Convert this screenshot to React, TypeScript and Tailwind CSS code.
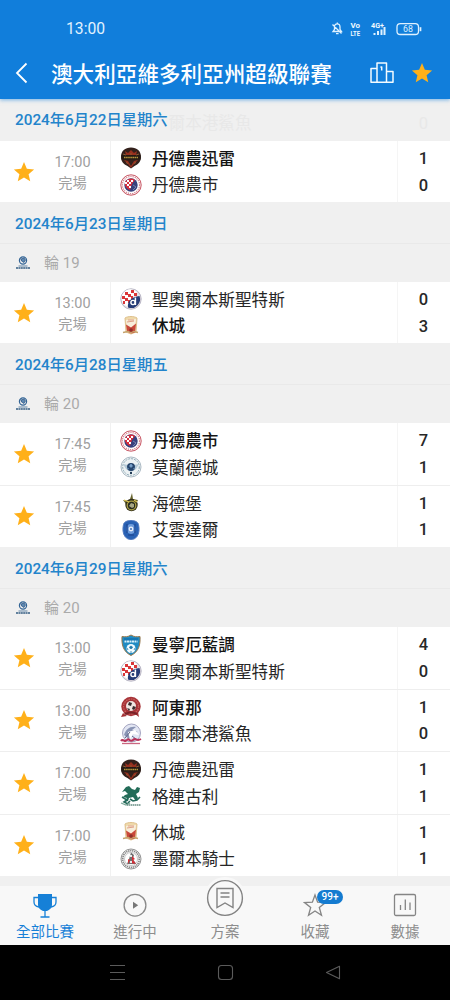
import React from "react";

type Crest =
  | "thunder" | "dandenong" | "saints" | "hume" | "moreland" | "heidelberg"
  | "avondale" | "manningham" | "altona" | "sharks" | "gully" | "knights";

interface Team { name: string; crest: Crest; score: number; bold?: boolean }
interface Match { time: string; home: Team; away: Team }
interface Day { date: string; round?: string; matches: Match[] }

const STAR = "M12 1.2l3.1 7.3 7.9.7-6 5.2 1.8 7.7L12 18l-6.8 4.1L7 14.4 1 9.2l7.9-.7z";

const t = (name: string, crest: Crest, score: number, bold = false): Team => ({ name, crest, score, bold });

const days: Day[] = [
  {
    date: "2024年6月22日星期六",
    matches: [{ time: "17:00", home: t("丹德農迅雷", "thunder", 1, true), away: t("丹德農市", "dandenong", 0) }],
  },
  {
    date: "2024年6月23日星期日",
    round: "輪 19",
    matches: [{ time: "13:00", home: t("聖奧爾本斯聖特斯", "saints", 0), away: t("休城", "hume", 3, true) }],
  },
  {
    date: "2024年6月28日星期五",
    round: "輪 20",
    matches: [
      { time: "17:45", home: t("丹德農市", "dandenong", 7, true), away: t("莫蘭德城", "moreland", 1) },
      { time: "17:45", home: t("海德堡", "heidelberg", 1), away: t("艾雲達爾", "avondale", 1) },
    ],
  },
  {
    date: "2024年6月29日星期六",
    round: "輪 20",
    matches: [
      { time: "13:00", home: t("曼寧厄藍調", "manningham", 4, true), away: t("聖奧爾本斯聖特斯", "saints", 0) },
      { time: "13:00", home: t("阿東那", "altona", 1, true), away: t("墨爾本港鯊魚", "sharks", 0) },
      { time: "17:00", home: t("丹德農迅雷", "thunder", 1), away: t("格連古利", "gully", 1) },
      { time: "17:00", home: t("休城", "hume", 1), away: t("墨爾本騎士", "knights", 1) },
    ],
  },
];

function CrestArt({ kind }: { kind: Crest }) {
  switch (kind) {
    case "thunder":
      return (
        <>
          <path d="M11 .5c6 0 10 3.500 10 9.500 0 4-2.500 7.500-6.500 9L11 21.500 7.500 19C3.500 17.500 1 14 1 10 1 4 5 .5 11 .5z" fill="#33201b" />
          <path d="M5 4l3 2 3-3 3 3 3-2-1 4H6zM4 13l4 1 3 5 3-5 4-1-4 4-3 4-3-4z" fill="#97301f" />
          <path d="M1.500 8h19v4.500h-19z" fill="#251a14" />
          <path d="M4 10.500h14" stroke="#b8983d" strokeWidth="1.300" strokeDasharray="1.600 .5" />
          <path d="M3 7l3 1M19 7l-3 1M6 15.500l2 1M16 15.500l-2 1M10 7h2" stroke="#8f5931" />
        </>
      );
    case "dandenong":
      return (
        <>
          <circle cx="11" cy="11" r="10.200" fill="#fff" stroke="#c65361" />
          <circle cx="11" cy="11" r="8.600" fill="none" stroke="#d78b95" strokeWidth="1.300" strokeDasharray="1.300 .9" />
          <circle cx="11" cy="11" r="6.700" fill="#37417d" />
          <path d="M5 8a6.700 6.700 0 0 1 10-2l-3 4-2 6a7 7 0 0 1-5-8z" fill="#d52e3e" />
          <path d="M7 6h2v2H7zM11 6h2v2h-2zM9 8h2v2H9zM5 8h2v2H5zM7 10h2v2H7zM9 12h2v2H9z" fill="#fff" />
          <path d="M13 11l3 2-3 3" stroke="#7782ac" fill="none" />
        </>
      );
    case "saints":
      return (
        <>
          <circle cx="11" cy="11" r="10.200" fill="#e9e1e4" stroke="#b7b5c4" />
          <path d="M2 13A9 9 0 0 1 17 4l-4 5-4 10a9 9 0 0 1-7-6z" fill="#fff" />
          <path d="M5 4h3v3H5zM11 2h3v3h-3zM8 6h3v3H8zM2 8h3v3H2zM14 5h3v3h-3zM5 10h3v3H5zM11 8h2v3h-2zM3 13h2v3H3zM8 12h2v3H8z" fill="#d93639" />
          <path d="M19.500 8A9 9 0 0 1 8 19.500c-1-6 4-11 11.500-11.500z" fill="#263c77" />
          <circle cx="13" cy="14.500" r="2.100" fill="none" stroke="#fff" strokeWidth="1.400" />
          <path d="M15.400 9.500v7.500" stroke="#fff" strokeWidth="1.500" />
        </>
      );
    case "hume":
      return (
        <>
          <path d="M5 3c3-2 9-2 12 0l-1 14-5 2-5-2z" fill="#efd9aa" stroke="#dfc18e" />
          <path d="M6 5l10-1-1 8-8 1z" fill="#f8eedb" />
          <path d="M6 9.500l5 3 5-4-1 9-4 1-4-2z" fill="#c9483a" />
          <path d="M8 5h6M7 7l7-1" stroke="#dfa187" />
          <path d="M3 17.500l5-1 3 1 3-1 4 1" fill="none" stroke="#c5a36d" strokeWidth="1.300" />
          <circle cx="11" cy="15" r="1.800" fill="#8e302a" />
        </>
      );
    case "moreland":
      return (
        <>
          <circle cx="11" cy="11" r="10" fill="#edf2f4" stroke="#acbac4" />
          <circle cx="11" cy="11" r="8.300" fill="none" stroke="#8eabb7" strokeDasharray="2 1" />
          <path d="M3 8l5 1 3-2 3 2 5-1-3 5-5 3-5-3z" fill="#b5c9d6" />
          <circle cx="11" cy="11" r="4" fill="#27466e" />
          <path d="M11 8l1.500 2-1.500 1.500L9.500 10zM7 12l2 1M15 12l-2 1" fill="#7ba4cd" stroke="#7ba4cd" strokeWidth=".7" />
          <path d="M10 16h2v2h-2z" fill="#243d57" />
        </>
      );
    case "heidelberg":
      return (
        <>
          <path d="M12 1l1 6h-3zM3 8l6 1 4-2 5 1-2 4H6z" fill="#69652f" />
          <circle cx="11.500" cy="13" r="6.200" fill="#332f1b" />
          <circle cx="11.500" cy="13.500" r="4.300" fill="#272a20" stroke="#a69d46" strokeWidth="1.300" />
          <path d="M9 14l2-3 3 1v3l-2 1z" fill="#a8a785" />
          <path d="M4 8l5 2M14 8l3 2" stroke="#dbc452" strokeWidth="1.300" />
        </>
      );
    case "avondale":
      return (
        <>
          <path d="M11 1.500c4 0 7 1.500 7.500 4 1 4 .8 9-1.500 12-1.500 2-3.500 3-6 3s-4.500-1-6-3C2.700 14.500 2.500 9.500 3.500 5.500 4 3 7 1.500 11 1.500z" fill="#2861b4" stroke="#537bc0" />
          <circle cx="11" cy="10" r="5" fill="#6d9bdb" />
          <path d="M7 5v9M15 5v9M8 16h6" stroke="#204c98" strokeWidth="1.500" />
          <circle cx="11" cy="10" r="2.400" fill="#e6edfa" />
          <circle cx="11" cy="10" r="1" fill="#426fb5" />
        </>
      );
    case "manningham":
      return (
        <>
          <path d="M11 1c3 2 6 2 9 1.500.5 8-1 15-9 19C3 17.500 1.500 10.500 2 2.500 5 3 8 3 11 1z" fill="#208bc2" stroke="#97784d" />
          <path d="M4 4h14v3H4z" fill="#1677b3" />
          <path d="M4.500 7.500h13" stroke="#d6f0fa" strokeWidth="2" strokeDasharray="2 .5" />
          <circle cx="11" cy="14.500" r="4.500" fill="#f1fbff" />
          <path d="M11 12l1.500 1-.7 1.500h-1.600L9.500 13zM7 14l1 2M15 14l-1 2M10 18h2" fill="#227aaa" stroke="#227aaa" strokeWidth=".8" />
        </>
      );
    case "altona":
      return (
        <>
          <path d="M3 17l-2 4 6-1zM15 18l4 3-1-5z" fill="#a33235" />
          <circle cx="11" cy="10.500" r="9.700" fill="#a73338" />
          <circle cx="11" cy="10.500" r="7.500" fill="none" stroke="#c8635e" strokeWidth="1.200" strokeDasharray="1.500 1" />
          <circle cx="11" cy="10" r="5" fill="#f0e5e1" />
          <path d="M9 6l3 1-1 3-3-1zM13 10l3 1-2 3-2-1zM7 12l3 1-1 2z" fill="#382a2d" />
          <path d="M5 18c4-2 8-2 12 0" stroke="#762227" fill="none" strokeWidth="2" />
        </>
      );
    case "sharks":
      return (
        <>
          <circle cx="11.500" cy="10" r="9" fill="#e2e6f3" stroke="#a4a5c1" />
          <path d="M4 12c2-6 6-9 12-8l-4 3 6 2c-5 0-7 3-9 7z" fill="#8994b4" />
          <path d="M8 9l7-2 4 5-6-1-3 5z" fill="#fff" />
          <path d="M5 15l5-6M12 13l4 3" stroke="#5f6387" />
          <path d="M1 18c2-3 4 2 6-1s3 3 6 0 3 2 8-1" fill="none" stroke="#b83259" strokeWidth="2" />
          <path d="M2 20.500h18" stroke="#cb6680" strokeWidth="1.300" />
        </>
      );
    case "gully":
      return (
        <>
          <path d="M6 2l3-1 3 3 3 1 2-3 3 1-1 4-3 2 2 4-2 3-3-4-4 1-1 3-4 1 3-4-4-1 2-2 3-1-3-3-3 1z" fill="#236c58" />
          <path d="M2 12l5 3-3 2 4 2M10 14l3 2 4-1 3-3M10 16l-2 2" fill="none" stroke="#24695a" strokeWidth="1.600" />
          <path d="M1 18l5 2 4-2" fill="none" stroke="#79a798" strokeWidth="1.300" />
          <path d="M7 20h14" stroke="#668c82" strokeWidth="1.500" strokeDasharray="1.500 .5" />
        </>
      );
    case "knights":
      return (
        <>
          <circle cx="11" cy="11" r="10" fill="#f4f4f4" stroke="#959595" />
          <circle cx="11" cy="11" r="8.300" fill="none" stroke="#858585" strokeWidth="1.700" strokeDasharray="1.200 .8" />
          <circle cx="11" cy="11" r="6.500" fill="#fff" stroke="#aaa" strokeWidth=".6" />
          <path d="M11 4.500l3 2.500-1 4 3 5H7l2-5z" fill="#707070" />
          <path d="M12 8l3 3-2 1 3 3.500h-4zM8 11l2 1-2 4z" fill="#d52f38" />
          <path d="M10 7h2v2h-2zM10 13h2v2h-2z" fill="#eee" />
        </>
      );
  }
}

function StarIcon({ className }: { className: string }) {
  return <svg viewBox="0 0 24 24" className={className}><path d={STAR} fill="#ffb019" /></svg>;
}

function TeamLine({ team }: { team: Team }) {
  return (
    <div className="flex h-[26.5px] items-center">
      <svg viewBox="0 0 22 22" className="ml-[9px] mr-[10px] size-[22px] shrink-0" fill="none"><CrestArt kind={team.crest} /></svg>
      <span className={team.bold ? "pt-[3px] text-[16.6px] font-medium leading-[26px] text-[#151515]" : "pt-[3px] text-[16.6px] leading-[26px] text-[#262626]"}>{team.name}</span>
    </div>
  );
}

function MatchRow({ match, size }: { match: Match; size: "single" | "last" | "inner" }) {
  const height = {
    single: "flex h-[61px] bg-white",
    last: "flex h-[61.5px] bg-white",
    inner: "flex h-[62.5px] border-b border-[#eeeeee] bg-white",
  }[size];
  return (
    <div className={height}>
      <div className="flex w-[111px] items-center border-r border-[#f1f1f1]">
        <StarIcon className="ml-[13px] size-[22px]" />
        <div className="ml-[12px] w-[51px] pt-[3px] text-center text-[#a0a0a0]">
          <div className="text-[14.5px] leading-[21px]">{match.time}</div>
          <div className="text-[14.2px] leading-[21px]">完場</div>
        </div>
      </div>
      <div className="flex w-[287px] flex-col justify-center border-r border-[#f5f5f5]">
        <TeamLine team={match.home} />
        <TeamLine team={match.away} />
      </div>
      <div className="flex flex-1 flex-col justify-center pr-px pt-[2px] text-center text-[16.5px] font-medium leading-[26.5px] text-[#282828]">
        <div>{match.home.score}</div>
        <div>{match.away.score}</div>
      </div>
    </div>
  );
}

function LeagueIcon() {
  return (
    <svg viewBox="0 0 16 14" className="h-[14px] w-4" fill="none">
      <circle cx="8" cy="4.500" r="3.600" stroke="#346596" strokeWidth="1.200" />
      <path d="M6 3l3-1 1.500 2L9 6.500 6.500 5z" fill="#5d88b0" stroke="#244f82" strokeWidth=".7" />
      <path d="M3.500 10h9" stroke="#6488a9" />
      <path d="M1 12h14" stroke="#355d83" strokeWidth="1.400" strokeDasharray="2 .4" />
    </svg>
  );
}

function Header() {
  return (
    <header className="relative z-10 h-[99px] bg-[#117edb] text-white shadow-[0_1px_4px_rgba(17,126,219,0.55)]">
      <div className="flex h-[49px] items-center pl-[66px] pt-[9px]">
        <span className="text-[15.7px] leading-5 text-[#e0f2ff]">13:00</span>
        <svg viewBox="0 0 94 18" className="ml-auto mr-[26px] h-[18px] w-[94px]" fill="none" stroke="#dff1ff">
          <path d="M3 11.500h8.500l-1.500-2V7c0-2-1-3.200-2.700-3.200S4.500 5 4.500 7v2.500zM6 13.700h2.600M2.500 4.500l9 9M7.300 2.500v1" strokeWidth="1.300" />
          <g fill="#f0f9ff" stroke="none" fontFamily="Roboto, sans-serif" fontWeight="700">
            <text x="20.500" y="7.800" fontSize="6.800" textLength="9.500" lengthAdjust="spacingAndGlyphs">Vo</text>
            <text x="20.500" y="15.500" fontSize="6.800" textLength="9.500" lengthAdjust="spacingAndGlyphs">LTE</text>
            <text x="41" y="8" fontSize="8" textLength="13" lengthAdjust="spacingAndGlyphs">4G+</text>
          </g>
          <path d="M44.500 15v-2M48 15v-4M51.500 15V9.500M54.500 15V7" strokeWidth="2" />
          <rect x="67" y="3.700" width="21.500" height="10.800" rx="3.300" strokeWidth="1.300" />
          <path d="M90.500 7.200v4" strokeWidth="1.700" />
          <text x="73" y="12.300" fontSize="8.800" fill="#dff1ff" stroke="none" fontFamily="Roboto, sans-serif" textLength="10">68</text>
        </svg>
      </div>
      <div className="flex h-[50px] items-center pb-[2px]">
        <svg viewBox="0 0 14 22" className="ml-[15px] h-[22px] w-[14px]" fill="none" stroke="white" strokeWidth="1.800"><path d="M11.500 1.500L2 11l9.500 9.500" /></svg>
        <h1 className="ml-[22px] whitespace-nowrap pt-[3px] text-[21.600px] font-medium leading-8">澳大利亞維多利亞州超級聯賽</h1>
        <svg viewBox="0 0 24 22" className="ml-auto h-[22px] w-6" fill="none" stroke="#f4fbff" strokeWidth="1.500">
          <path d="M7 6.500H1v13.700h22V9.500h-6M7 20V1h9.500v19M11.700 4.500v4M10.500 5.500l1.200-1" strokeLinejoin="round" />
        </svg>
        <StarIcon className="ml-[17px] mr-[17px] size-[22px]" />
      </div>
    </header>
  );
}

function BottomNav() {
  return (
    <nav className="relative grid h-[59px] grid-cols-5 bg-[#f8f8f8] pt-[7px] text-center text-[14.500px] leading-5 text-[#8d8d8d]">
      <div className="flex flex-col items-center text-[#1680d7]">
        <svg viewBox="0 0 24 25" className="h-[25px] w-6" fill="currentColor">
          <path d="M5 1h14v11c0 3-2.500 5-5 6h-4c-2.500-1-5-3-5-6z" />
          <path d="M5 4.500H1v4.500c0 3 2 4.500 5 5M19 4.500h4v4.500c0 3-2 4.500-5 5M12 17v7M7.500 24h9" fill="none" stroke="currentColor" strokeWidth="1.300" />
        </svg>
        <span className="mt-[5px]">全部比賽</span>
      </div>
      <div className="flex flex-col items-center">
        <svg viewBox="0 0 24 25" className="h-[25px] w-6" fill="none"><circle cx="12" cy="12.200" r="10.900" stroke="#898989" strokeWidth="1.300" /><path d="M10 8.700l5.200 3.500-5.200 3.500z" fill="#777" /></svg>
        <span className="mt-[5px]">進行中</span>
      </div>
      <div className="relative flex flex-col items-center pt-[30px]">
        <svg viewBox="0 0 44 44" className="absolute left-[23px] top-[-17px] size-[44px]" fill="none">
          <circle cx="22" cy="22" r="21" fill="#f8f8f8" />
          <circle cx="22" cy="22" r="17.400" stroke="#838383" strokeWidth="1.400" />
          <path d="M14 12.500h16v19l-8-4.500-8 4.500zM17.500 17h9M17.500 21h9" stroke="#838383" strokeWidth="1.400" />
        </svg>
        <span>方案</span>
      </div>
      <div className="relative flex flex-col items-center">
        <svg viewBox="0 0 24 25" className="h-[25px] w-6" fill="none"><path d="M12 2l2.600 7.200 7.800.4-6.100 4.900 2.200 7.800-6.500-4.300-6.500 4.300 2.200-7.800L1.600 9.600l7.800-.4z" stroke="#858585" strokeWidth="1.300" /></svg>
        <span className="absolute left-[47px] top-[-3px] h-[14px] w-[26px] rounded-full bg-[#147bd0] text-[10px] font-medium leading-[14px] text-white">99+</span>
        <span className="mt-[5px]">收藏</span>
      </div>
      <div className="flex flex-col items-center">
        <svg viewBox="0 0 24 25" className="h-[25px] w-6" fill="none" stroke="#858585" strokeWidth="1.300"><rect x="1.500" y="1.500" width="21" height="21" rx="1.500" /><path d="M7.500 17v-5M12.300 17V6.500M17 17V9.500" /></svg>
        <span className="mt-[5px]">數據</span>
      </div>
    </nav>
  );
}

export default function App() {
  return (
    <div className="flex h-[1000px] w-[450px] flex-col overflow-hidden bg-[#f0f0f0] font-[Roboto,'Noto_Sans_CJK_TC',sans-serif]">
      <Header />
      <main className="h-[787px] shrink-0">
        {days.map((day, i) => (
          <section key={day.date}>
            <div className={i === 0 ? "relative flex h-[42px] items-center pl-[15px]" : "flex h-[41px] items-center pl-[15px] pt-[2px]"}>
              <h2 className="text-[15.300px] font-medium leading-6 text-[#2384cb]">{day.date}</h2>
              {i === 0 && (
                <div className="absolute inset-x-0 top-[12px] flex h-[26px] items-center pl-[168.6px] text-[16.600px] leading-[26px] text-[#e8e8e8]">
                  <span>爾本港鯊魚</span><span className="ml-auto mr-[22px]">0</span>
                </div>
              )}
            </div>
            {day.round && (
              <div className="flex h-[39px] items-center border-t border-[#e9e9e9] pl-[15px]">
                <LeagueIcon />
                <span className="ml-[13px] text-[15px] leading-6 text-[#aaa]">{day.round}</span>
              </div>
            )}
            {day.matches.map((match, j) => (
              <MatchRow key={j} match={match} size={day.matches.length === 1 ? "single" : j === day.matches.length - 1 ? "last" : "inner"} />
            ))}
          </section>
        ))}
      </main>
      <BottomNav />
      <footer className="h-[55px] shrink-0 bg-black">
        <div className="flex h-full items-center justify-center gap-[91px]">
          <svg viewBox="0 0 17 17" className="size-[17px]" fill="none" stroke="#5b5b5b" strokeWidth="1.100"><path d="M1 1.500h15M1 8.500h15M1 15.500h15" /></svg>
          <svg viewBox="0 0 17 17" className="size-[17px]" fill="none" stroke="#5b5b5b" strokeWidth="1.100"><rect x="1.500" y="1.500" width="14" height="14" rx="3" /></svg>
          <svg viewBox="0 0 17 17" className="size-[17px]" fill="none" stroke="#5b5b5b" strokeWidth="1.100"><path d="M14.500 2.300v12.400L1.500 8.500z" strokeLinejoin="round" /></svg>
        </div>
      </footer>
    </div>
  );
}
